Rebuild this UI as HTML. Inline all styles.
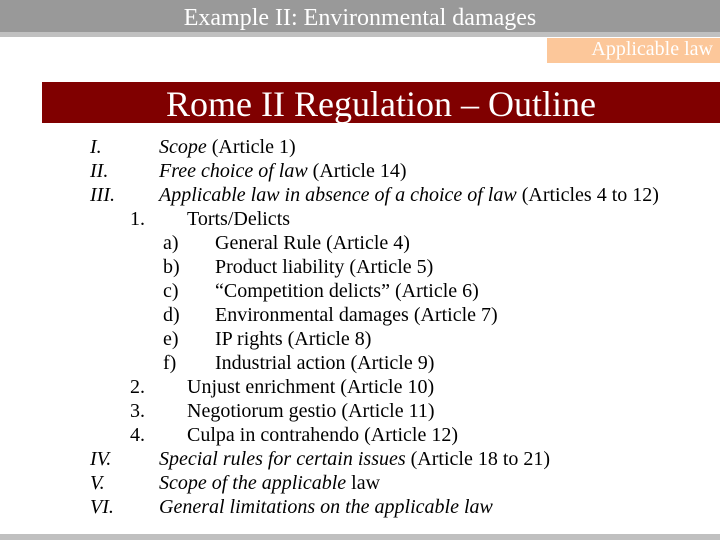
<!DOCTYPE html>
<html><head><style>
body{margin:0;width:720px;height:540px;position:relative;background:#fff;font-family:"Liberation Serif",serif;overflow:hidden}
.a{position:absolute;white-space:nowrap}
.l{position:absolute;font-size:20px;line-height:24px;white-space:nowrap;color:#000}
</style></head><body>
<div class="a" style="left:0;top:0;width:720px;height:32px;background:#999"></div>
<div class="a" style="left:0;top:32px;width:720px;height:5px;background:#c0c0c0"></div>
<div class="a" style="left:0;top:4px;width:720px;text-align:center;color:#fff;font-size:24px;line-height:28px">Example II: Environmental damages</div>
<div class="a" style="left:547px;top:38px;width:173px;height:25px;background:#fcc79a"></div>
<div class="a" style="right:7px;top:37px;color:#fff;font-size:20px;line-height:25px">Applicable law</div>
<div class="a" style="left:42px;top:82px;width:678px;height:41px;background:#800000"></div>
<div class="a" style="left:0;top:83px;width:762px;text-align:center;color:#fff;font-size:36px;line-height:42px">Rome II Regulation – Outline</div>
<div class="l" style="left:90px;top:135px"><i>I.</i></div>
<div class="l" style="left:159px;top:135px"><i>Scope</i> (Article 1)</div>
<div class="l" style="left:90px;top:159px"><i>II.</i></div>
<div class="l" style="left:159px;top:159px"><i>Free choice of law</i> (Article 14)</div>
<div class="l" style="left:90px;top:183px"><i>III.</i></div>
<div class="l" style="left:159px;top:183px"><i>Applicable law in absence of a choice of law</i> (Articles 4 to 12)</div>
<div class="l" style="left:130px;top:207px">1.</div><div class="l" style="left:187px;top:207px">Torts/Delicts</div>
<div class="l" style="left:163px;top:231px">a)</div><div class="l" style="left:215px;top:231px">General Rule (Article 4)</div>
<div class="l" style="left:163px;top:255px">b)</div><div class="l" style="left:215px;top:255px">Product liability (Article 5)</div>
<div class="l" style="left:163px;top:279px">c)</div><div class="l" style="left:215px;top:279px">“Competition delicts” (Article 6)</div>
<div class="l" style="left:163px;top:303px">d)</div><div class="l" style="left:215px;top:303px">Environmental damages (Article 7)</div>
<div class="l" style="left:163px;top:327px">e)</div><div class="l" style="left:215px;top:327px">IP rights (Article 8)</div>
<div class="l" style="left:163px;top:351px">f)</div><div class="l" style="left:215px;top:351px">Industrial action (Article 9)</div>
<div class="l" style="left:130px;top:375px">2.</div><div class="l" style="left:187px;top:375px">Unjust enrichment (Article 10)</div>
<div class="l" style="left:130px;top:399px">3.</div><div class="l" style="left:187px;top:399px">Negotiorum gestio (Article 11)</div>
<div class="l" style="left:130px;top:423px">4.</div><div class="l" style="left:187px;top:423px">Culpa in contrahendo (Article 12)</div>
<div class="l" style="left:90px;top:447px"><i>IV.</i></div>
<div class="l" style="left:159px;top:447px"><i>Special rules for certain issues</i> (Article 18 to 21)</div>
<div class="l" style="left:90px;top:471px"><i>V.</i></div>
<div class="l" style="left:159px;top:471px"><i>Scope of the applicable</i> law</div>
<div class="l" style="left:90px;top:495px"><i>VI.</i></div>
<div class="l" style="left:159px;top:495px"><i>General limitations on the applicable law</i></div>
<div class="a" style="left:0;top:534px;width:720px;height:6px;background:#c0c0c0"></div>
</body></html>
